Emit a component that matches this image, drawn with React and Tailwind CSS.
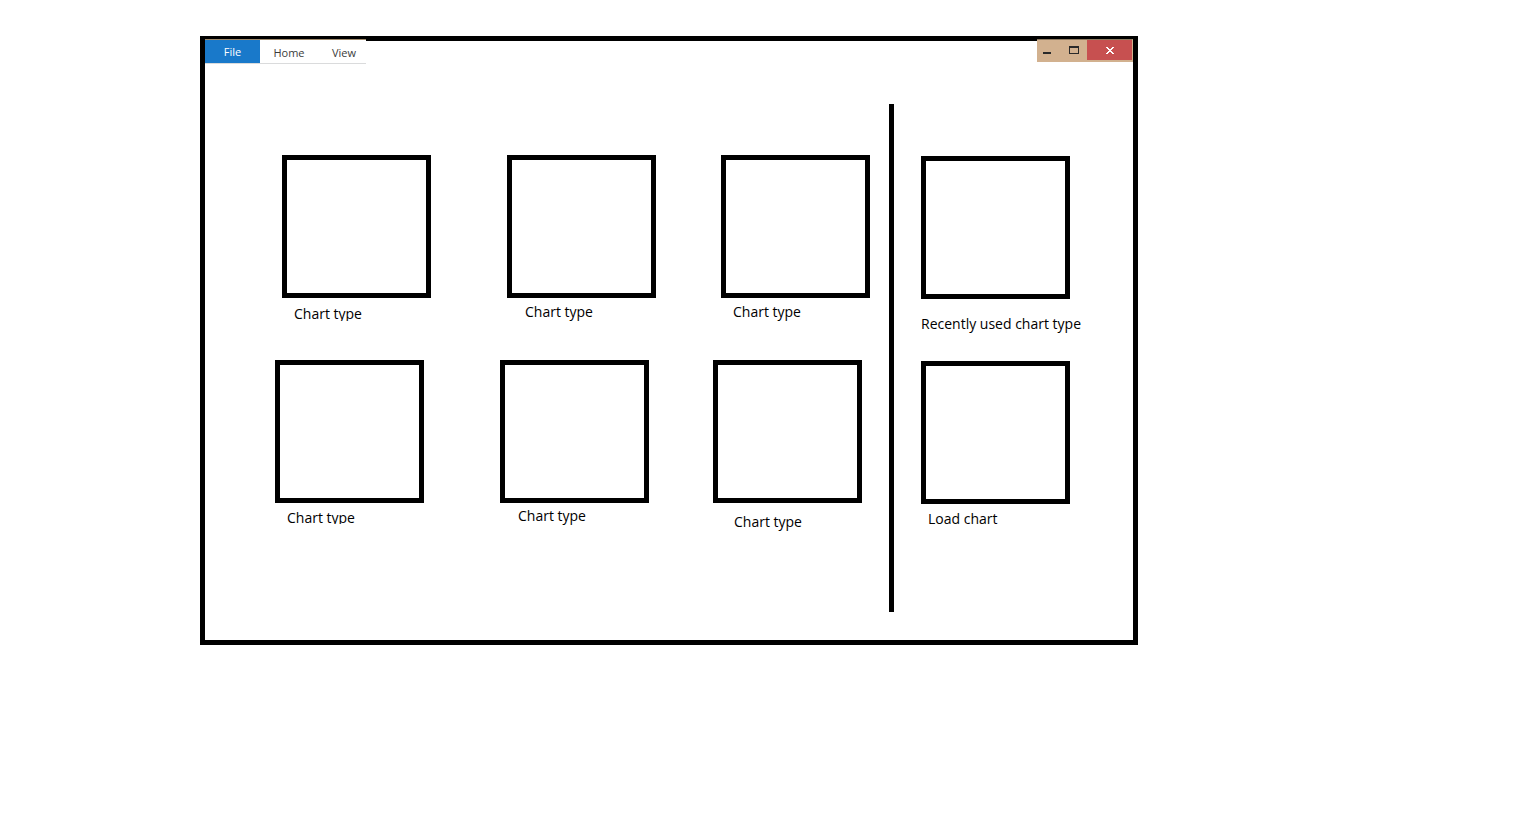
const firstRow = [
  { name: 'Chart type', label: 'mt-1.5 ml-3 h-[17px] overflow-hidden' },
  { name: 'Chart type', label: 'mt-1 ml-[18px]' },
  { name: 'Chart type', label: 'mt-1 ml-3' },
];

const secondRow = [
  { name: 'Chart type', label: 'mt-[5px] ml-3 h-4 overflow-hidden' },
  { name: 'Chart type', label: 'mt-[3px] ml-[18px]' },
  { name: 'Chart type', label: 'mt-[9px] ml-[21px]' },
];

function ChartTile({ name, label }) {
  return (
    <button type="button" className="flex min-h-[205px] flex-col items-start text-left">
      <span className="h-[143px] w-[149px] border-[5px] border-black bg-white" />
      <span className={`block text-sm leading-5 whitespace-nowrap text-black ${label}`}>{name}</span>
    </button>
  );
}

function TitleBar() {
  return (
    <header className="-mt-0.5 flex items-start justify-between">
      <nav className="flex h-[25px] border-t border-b border-t-[#a08a6c] border-b-[#dadbdc] bg-white font-['Open_Sans',sans-serif] text-[11px] text-[#3b3b3b]">
        <button type="button" className="w-[55px] bg-[#1979ca] pt-0.5 text-white">File</button>
        <button type="button" className="w-[58px] pt-1">Home</button>
        <button type="button" className="w-[48px] pt-1 pl-1">View</button>
      </nav>
      <div className="flex h-[23px] items-start border-t border-r border-t-[#8f7a60] border-r-[#d2b18f] bg-[#d2b18f]">
        <button type="button" aria-label="Minimize" className="flex h-5 w-6 items-center pl-1.5">
          <svg width="8" height="12" viewBox="0 0 8 12" fill="#2a2a2a" shapeRendering="crispEdges">
            <path d="M0 8h8v2H0z" />
          </svg>
        </button>
        <button type="button" aria-label="Maximize" className="flex h-5 w-[26px] items-center justify-center">
          <svg width="10" height="8" viewBox="0 0 10 8" fill="#2a2a2a" shapeRendering="crispEdges">
            <path fillRule="evenodd" d="M0 0h10v8H0z M1 2v5h8V2z" />
          </svg>
        </button>
        <button type="button" aria-label="Close" className="flex h-5 w-[45px] items-center justify-center bg-[#c75050]">
          <svg width="8" height="7" viewBox="0 0 8 7" fill="#fff" shapeRendering="crispEdges">
            <path d="M0 0h2v1h1v1h2V1h1V0h2v1H7v1H6v1H5v1h1v1h1v1h1v1H6V6H5V5H3v1H2v1H0V6h1V5h1V4h1V3H2V2H1V1H0z" />
          </svg>
        </button>
      </div>
    </header>
  );
}

export default function App() {
  return (
    <div className="min-h-screen bg-white pt-9 pr-[394px] pl-[200px] font-['Open_Sans',sans-serif]">
      <div className="min-w-[938px] border-[5px] border-black bg-white">
        <TitleBar />
        <main className="flex min-h-[576px]">
          <section aria-label="Chart types" className="flex-1 pt-[91px]">
            <div className="grid grid-cols-[225fr_214fr_149px] pr-[19px] pl-[77px]">
              {firstRow.map((tile, i) => <ChartTile key={i} {...tile} />)}
            </div>
            <div className="grid grid-cols-[225fr_213fr_149px] pr-[27px] pl-[70px]">
              {secondRow.map((tile, i) => <ChartTile key={i} {...tile} />)}
            </div>
          </section>
          <div className="mt-10 mb-7 w-[5px] bg-black" />
          <aside aria-label="Recent charts" className="w-[239px] pt-[92px] pl-[27px]">
            <ChartTile name="Recently used chart type" label="mt-[15px]" />
            <ChartTile name="Load chart" label="mt-[5px] ml-[7px]" />
          </aside>
        </main>
      </div>
    </div>
  );
}
